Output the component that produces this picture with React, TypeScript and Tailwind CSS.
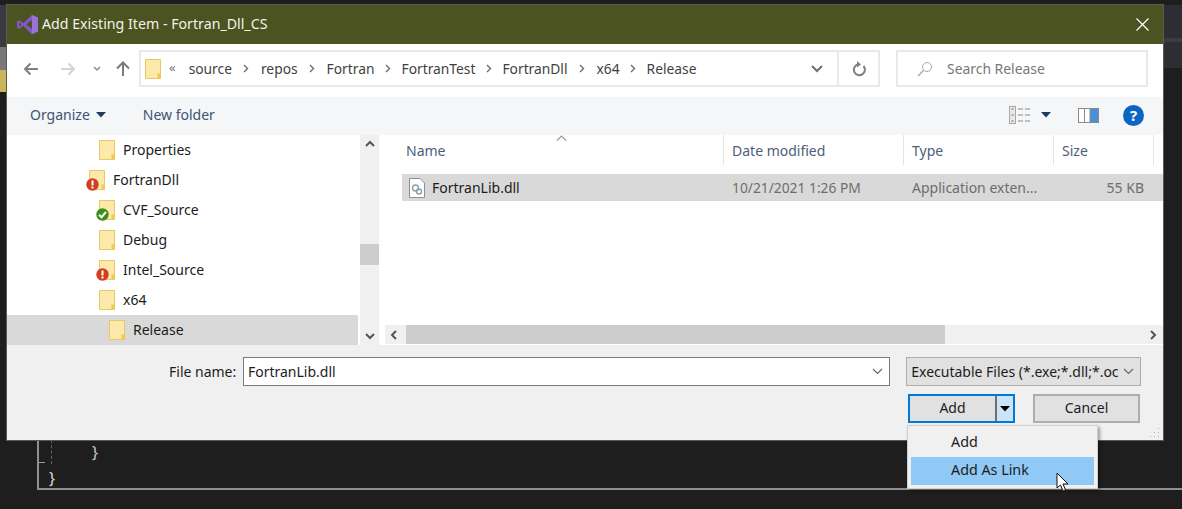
import React from "react";

const font = { fontFamily: '"Noto Sans", "Open Sans", sans-serif' };

function Folder({ badge }: { badge?: "err" | "ok" }) {
  return (
    <span className="relative inline-block w-[16px] h-[20px] shrink-0">
      <svg width="16" height="20" viewBox="0 0 16 20" className="block">
        <path d="M0.5 0.5H15.5V19.5H0.5Z" fill="#fbe08f" stroke="#e8c768" />
        <path d="M1 1H15V14H12.5V19H1Z" fill="#fde9a9" />
        <path d="M12.5 14.5H15.5V19.5H12.5Z" fill="#f2c955" />
      </svg>
      {badge === "err" && (
        <svg width="13" height="13" viewBox="0 0 13 13" className="absolute left-[-3px] top-[8px]">
          <circle cx="6.5" cy="6.5" r="6.2" fill="#d13f21" />
          <rect x="5.5" y="2.5" width="2" height="5" fill="#fff" />
          <rect x="5.5" y="8.5" width="2" height="2" fill="#fff" />
        </svg>
      )}
      {badge === "ok" && (
        <svg width="13" height="13" viewBox="0 0 13 13" className="absolute left-[-3px] top-[8px]">
          <circle cx="6.5" cy="6.5" r="6.2" fill="#3d8f1d" />
          <path d="M3 6.8L5.5 9.2L10 4" fill="none" stroke="#fff" strokeWidth="2" />
        </svg>
      )}
    </span>
  );
}

function Sep({ tight }: { tight?: boolean }) {
  return (
    <svg width="6" height="9" viewBox="0 0 6 9" className={`shrink-0 ${tight ? "mx-[10.5px]" : "mx-[11.5px]"}`}>
      <path d="M1 1L4.5 4.5L1 8" fill="none" stroke="#6d6d6d" strokeWidth="1.4" />
    </svg>
  );
}

function TreeRow({ name, pad, badge, selected }: { name: string; pad: string; badge?: "err" | "ok"; selected?: boolean }) {
  return (
    <div className={`h-[30px] flex items-center gap-[8px] ${pad} ${selected ? "bg-[#d9d9d9]" : ""}`}>
      <Folder badge={badge} />
      <span className="text-[#1c1c1c]">{name}</span>
    </div>
  );
}

function HeaderCell({ label, w }: { label: string; w: string }) {
  return (
    <div className={`${w} h-[30px] border-r border-[#e5e5e5] pl-[8px] pt-[2px] flex items-center text-[#4c607a] shrink-0`}>{label}</div>
  );
}

export default function App() {
  return (
    <div className="relative w-[1182px] h-[509px] bg-[#1e1e1e] overflow-hidden text-[14px] leading-[20px]" style={font}>
      {/* Editor background */}
      <div className="absolute left-0 top-[5px] w-[7px] h-[42px] bg-[#3a3a42]" />
      <div className="absolute left-0 top-[47px] w-[7px] h-[23px] bg-[#77777c]" />
      <div className="absolute left-0 top-[70px] w-[7px] h-[22px] bg-[#c9b55a]" />
      <div className="absolute left-[1163px] top-[5px] w-[19px] h-[63px] bg-[#2d2d33]" />
      <div className="absolute left-[1163px] top-[38px] w-[19px] h-[4px] bg-[#3c3c42]" />
      <div className="absolute left-[37px] top-[440px] w-[1145px] h-[50px] border-l-2 border-b-2 border-[#8f8f8f]">
        <span className="absolute left-[53px] top-[2px] text-[#c8c8c8] text-[16px]">{"}"}</span>
        <span className="absolute left-[10px] top-[28px] text-[#d8d8d8] text-[16px]">{"}"}</span>
        <span className="absolute left-[12px] top-0 h-[24px] border-l border-dashed border-[#666]" />
        <span className="absolute left-0 top-[22px] w-[6px] border-t border-[#999]" />
      </div>

      {/* Dialog window */}
      <div className="absolute left-[7px] top-[5px] w-[1156px] h-[435px] flex flex-col bg-[#f0f0f0] shadow-[0_0_0_1px_#5b5b4e]">
        {/* Title bar */}
        <div className="h-[39px] shrink-0 bg-[#4b5320] flex items-center pl-[10px] pr-[14px] pb-[1px] text-[#f2f2e8]">
          <svg width="21" height="21" viewBox="0 0 24 24" className="shrink-0">
            <path d="M17 1L24 4V20L17 23L7 13.5L2.5 17L0 15.7V8.3L2.5 7L7 10.5Z" fill="#8257c4" />
            <path d="M17 1L24 4V20L17 23Z" fill="#9a72d6" />
            <path d="M17 7V17L10.5 12Z" fill="#4b5320" />
            <path d="M2.5 9.5V14.5L5 12Z" fill="#4b5320" />
          </svg>
          <span className="ml-[4px] text-[14.2px]">Add Existing Item - Fortran_Dll_CS</span>
          <svg width="13" height="13" viewBox="0 0 13 13" className="ml-auto mt-[1px]">
            <path d="M0.5 0.5L12.5 12.5M12.5 0.5L0.5 12.5" stroke="#fff" strokeWidth="1.2" />
          </svg>
        </div>

        {/* Navigation row */}
        <div className="h-[53px] shrink-0 bg-white flex items-start pt-[6px] pl-[16px] pr-[15px]">
          <div className="h-[37px] flex items-center shrink-0">
            <svg width="16" height="14" viewBox="0 0 16 14" className="shrink-0">
              <path d="M15 7H2M7.5 1.5L2 7L7.5 12.5" fill="none" stroke="#7f7f7f" strokeWidth="2" />
            </svg>
            <svg width="16" height="14" viewBox="0 0 16 14" className="ml-[21px] shrink-0">
              <path d="M1 7H14M8.5 1.5L14 7L8.5 12.5" fill="none" stroke="#d4d4d4" strokeWidth="2" />
            </svg>
            <svg width="8" height="6" viewBox="0 0 8 6" className="ml-[17px] shrink-0">
              <path d="M1 1L4 4L7 1" fill="none" stroke="#8a8a8a" strokeWidth="1.5" />
            </svg>
            <svg width="14" height="16" viewBox="0 0 14 16" className="ml-[15px] shrink-0">
              <path d="M7 15V2M1 7.5L7 1.5L13 7.5" fill="none" stroke="#7a7a7a" strokeWidth="2" />
            </svg>
          </div>
          <div className="ml-[9px] w-[741px] h-[37px] shrink-0 border-2 border-[#e9e9e9] flex items-center pl-[4px] text-[#3f3f3f] text-[13.8px]">
            <Folder />
            <span className="ml-[8px] text-[#777] text-[13px] leading-[16px] mb-[3px]">«</span>
            <span className="ml-[13px]">source</span>
            <Sep />
            <span>repos</span>
            <Sep />
            <span>Fortran</span>
            <Sep tight />
            <span>FortranTest</span>
            <Sep tight />
            <span>FortranDll</span>
            <Sep />
            <span>x64</span>
            <Sep tight />
            <span>Release</span>
            <div className="ml-auto w-[40px] h-full flex items-center justify-center">
              <svg width="12" height="8" viewBox="0 0 12 8">
                <path d="M1 1L6 6L11 1" fill="none" stroke="#6f6f6f" strokeWidth="2" />
              </svg>
            </div>
            <div className="w-[41px] h-full border-l-2 border-[#e9e9e9] flex items-center justify-center shrink-0">
              <svg width="14" height="16" viewBox="0 0 14 16">
                <path d="M11.5 5A5.5 5.5 0 1 1 5.5 3.5" fill="none" stroke="#808080" strokeWidth="2" />
                <path d="M5 0L9 3.5L5 6.5Z" fill="#808080" />
              </svg>
            </div>
          </div>
          <div className="ml-[16px] flex-1 h-[37px] border-2 border-[#e9e9e9] flex items-center pl-[19px] text-[#777]">
            <svg width="16" height="16" viewBox="0 0 16 16" className="shrink-0">
              <circle cx="10" cy="6" r="4.5" fill="none" stroke="#a8a8a8" strokeWidth="1" />
              <path d="M6.5 9.5L1 15" stroke="#a8a8a8" strokeWidth="1.4" />
            </svg>
            <span className="ml-[14px] whitespace-nowrap text-[13.9px]">Search Release</span>
          </div>
        </div>

        {/* Toolbar */}
        <div className="h-[38px] shrink-0 bg-[#f5f6f7] flex items-center pl-[23px] pr-[19px] pb-[2px] text-[#3f5372]">
          <span>Organize</span>
          <svg width="10" height="6" viewBox="0 0 10 6" className="ml-[6px]">
            <path d="M0 0H10L5 5.5Z" fill="#1f3a5f" />
          </svg>
          <span className="ml-[37px]">New folder</span>
          <svg width="22" height="18" viewBox="0 0 22 18" className="ml-auto">
            <rect x="0.5" y="0.5" width="6" height="17" fill="#e8e8e8" stroke="#a8a8a8" />
            <path d="M2.5 3H4.5M2.5 9H4.5M2.5 15H4.5" stroke="#666" />
            <path d="M9 3H14M16 3H21M9 9H14M16 9H21M9 15H14M16 15H21" stroke="#8a8a8a" />
          </svg>
          <svg width="10" height="6" viewBox="0 0 10 6" className="ml-[10px]">
            <path d="M0 0H10L5 5.5Z" fill="#1f3a5f" />
          </svg>
          <svg width="21" height="15" viewBox="0 0 21 15" className="ml-[27px]">
            <rect x="0.5" y="0.5" width="20" height="14" fill="#fff" stroke="#8a8a8a" />
            <rect x="12" y="1" width="8" height="13" fill="#4a90d9" />
            <path d="M6.5 1V14M12 1V14" stroke="#8a8a8a" />
          </svg>
          <div className="ml-[24px] w-[21px] h-[21px] rounded-full bg-[#0b66c3] text-white text-[15px] font-bold flex items-center justify-center">?</div>
        </div>

        {/* Main panes */}
        <div className="h-[210px] shrink-0 bg-white flex">
          <div className="w-[353px] shrink-0 pr-[2px] flex flex-col justify-end overflow-hidden">
            <TreeRow name="Properties" pad="pl-[92px]" />
            <TreeRow name="FortranDll" pad="pl-[82px]" badge="err" />
            <TreeRow name="CVF_Source" pad="pl-[92px]" badge="ok" />
            <TreeRow name="Debug" pad="pl-[92px]" />
            <TreeRow name="Intel_Source" pad="pl-[92px]" badge="err" />
            <TreeRow name="x64" pad="pl-[92px]" />
            <TreeRow name="Release" pad="pl-[102px]" selected />
          </div>
          <div className="w-[19px] shrink-0 bg-[#f0f0f0] flex flex-col items-center justify-between py-[4px] relative">
            <svg width="10" height="7" viewBox="0 0 10 7" className="mt-[1px]">
              <path d="M1 6L5 2L9 6" fill="none" stroke="#555" strokeWidth="2" />
            </svg>
            <div className="absolute left-0 top-[109px] w-full h-[21px] bg-[#cdcdcd]" />
            <svg width="10" height="7" viewBox="0 0 10 7" className="mb-[1px]">
              <path d="M1 1L5 5L9 1" fill="none" stroke="#555" strokeWidth="2" />
            </svg>
          </div>
          <div className="flex-1 min-w-0 flex flex-col">
            <div className="relative flex pl-[19px] h-[31px] shrink-0 overflow-hidden">
              <svg width="11" height="6" viewBox="0 0 11 6" className="absolute left-[177px] top-0">
                <path d="M1 5.5L5.5 1L10 5.5" fill="none" stroke="#9a9a9a" strokeWidth="1.2" />
              </svg>
              <HeaderCell label="Name" w="w-[326px]" />
              <HeaderCell label="Date modified" w="w-[180px]" />
              <HeaderCell label="Type" w="w-[150px]" />
              <HeaderCell label="Size" w="w-[100px]" />
            </div>
            <div className="ml-[23px] h-[27px] mt-[8px] shrink-0 bg-[#d9d9d9] flex items-center pl-[7px]">
              <svg width="16" height="20" viewBox="0 0 16 20" className="shrink-0">
                <path d="M0.5 0.5H11L15.5 5V19.5H0.5Z" fill="#fff" stroke="#8f8f8f" />
                <circle cx="6.5" cy="10" r="3" fill="none" stroke="#8aa0ad" strokeWidth="1.4" />
                <circle cx="10" cy="13.5" r="2.5" fill="none" stroke="#8aa0ad" strokeWidth="1.4" />
              </svg>
              <span className="ml-[7px] w-[300px] text-[#1c1c1c]">FortranLib.dll</span>
              <span className="w-[180px] text-[#6d6d6d] text-[13.8px]">10/21/2021 1:26 PM</span>
              <span className="w-[150px] text-[#6d6d6d] whitespace-nowrap">Application exten...</span>
              <span className="w-[82px] text-right text-[#6d6d6d]">55 KB</span>
            </div>
            <div className="mt-auto mb-[1px] h-[19px] shrink-0 ml-[6px] flex items-center bg-[#f0f0f0]">
              <svg width="7" height="10" viewBox="0 0 7 10" className="ml-[5px] shrink-0">
                <path d="M6 1L2 5L6 9" fill="none" stroke="#555" strokeWidth="2" />
              </svg>
              <div className="ml-[9px] w-[539px] h-full bg-[#cdcdcd]" />
              <svg width="7" height="10" viewBox="0 0 7 10" className="ml-auto mr-[6px] shrink-0">
                <path d="M1 1L5 5L1 9" fill="none" stroke="#555" strokeWidth="2" />
              </svg>
            </div>
          </div>
        </div>

        {/* Bottom bar */}
        <div className="relative flex-1 min-h-0 bg-[#f0f0f0] pt-[12px] pr-[22px] text-[#1c1c1c]">
          <div className="flex items-center">
            <span className="ml-[162px] mr-[6px] w-[68px]">File name:</span>
            <div className="w-[648px] h-[29px] border border-[#7a7a7a] bg-white flex items-center pl-[4px] pr-[6px]">
              <span>FortranLib.dll</span>
              <svg width="11" height="7" viewBox="0 0 11 7" className="ml-auto">
                <path d="M1 1L5.5 5.5L10 1" fill="none" stroke="#666" strokeWidth="1.2" />
              </svg>
            </div>
            <div className="ml-[16px] w-[235px] h-[29px] border border-[#adadad] bg-[#e1e1e1] flex items-center pl-[4px] pr-[6px]">
              <span className="whitespace-nowrap">Executable Files (*.exe;*.dll;*.oc</span>
              <svg width="11" height="7" viewBox="0 0 11 7" className="ml-auto shrink-0">
                <path d="M1 1L5.5 5.5L10 1" fill="none" stroke="#666" strokeWidth="1.2" />
              </svg>
            </div>
          </div>
          <div className="mt-[8px] ml-[901px] flex items-center">
            <div className="w-[107px] h-[29px] border-2 border-[#0078d7] bg-[#e1e1e1] flex">
              <div className="flex-1 flex items-center justify-center pb-[1px]">Add</div>
              <div className="w-[2px] h-full bg-[#6f6f6f]" />
              <div className="w-[16px] bg-[#cce4f7] flex items-center justify-center">
                <svg width="10" height="6" viewBox="0 0 10 6">
                  <path d="M0 0H10L5 5.5Z" fill="#000" />
                </svg>
              </div>
            </div>
            <div className="ml-[18px] w-[107px] h-[29px] border-2 border-[#adadad] bg-[#e1e1e1] flex items-center justify-center pb-[1px]">Cancel</div>
          </div>
          <svg width="11" height="11" viewBox="0 0 11 11" className="absolute right-[3px] bottom-[2px]">
            <path d="M9 1H10V2H9ZM5 5H6V6H5ZM9 5H10V6H9ZM1 9H2V10H1ZM5 9H6V10H5ZM9 9H10V10H9Z" fill="#b5b5b5" />
          </svg>
        </div>
      </div>

      {/* Dropdown menu */}
      <div className="absolute left-[907px] top-[425px] w-[191px] h-[64px] bg-[#f0f0f0] border border-[#cfcfcf] shadow-[2px_2px_3px_rgba(0,0,0,0.35)] px-[3px] py-[3px] flex flex-col text-[#1c1c1c] text-[14.3px]">
        <div className="h-[28px] flex items-center pl-[40px] pb-[2px]">Add</div>
        <div className="h-[28px] flex items-center pl-[40px] pb-[2px] bg-[#90c8f6]">Add As Link</div>
      </div>

      {/* Cursor */}
      <svg width="15" height="21" viewBox="0 0 15 21" className="absolute left-[1056px] top-[472px]">
        <path d="M1 1V16L4.5 13L7 19L9.5 18L7 12H12Z" fill="#fff" stroke="#111" strokeWidth="1" />
      </svg>
    </div>
  );
}
